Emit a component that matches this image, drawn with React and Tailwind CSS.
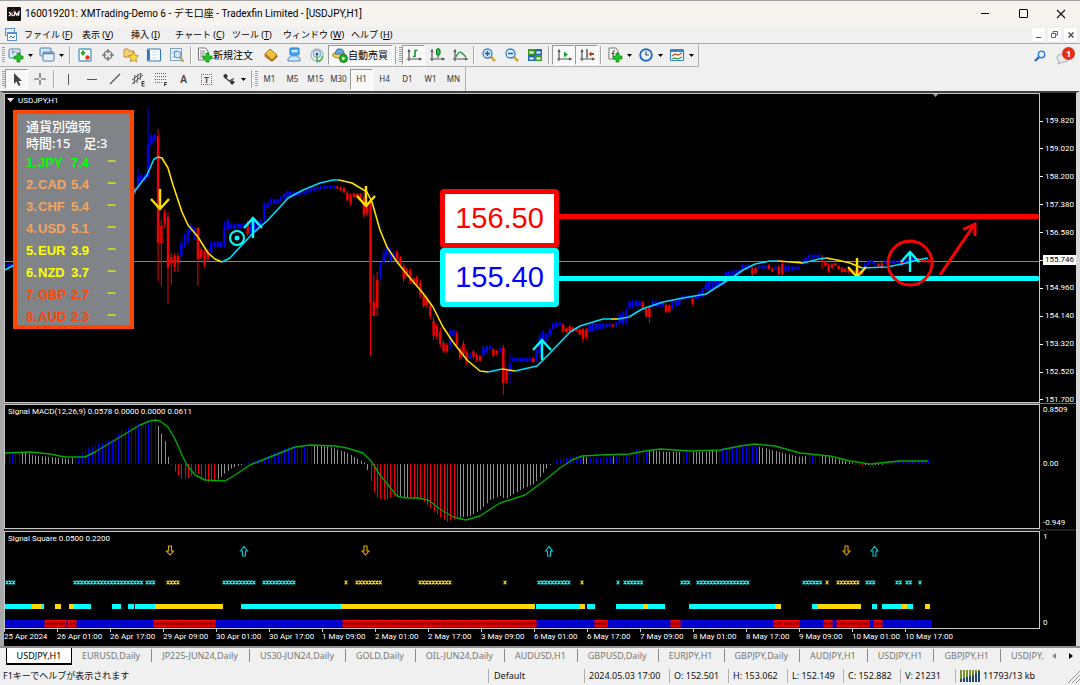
import React from 'react';

const STEP = 3.32;
const FIRST_X = 5.3;
const BAR_COUNT = 279;

// [color, x, high, low, bodyTop?, bodyBottom?]
const CANDLES = [
    ['b', 5, 263, 267], ['b', 12, 263, 267], ['r', 135, 187, 195], ['b', 138, 169, 189, 176, 186], ['b', 141, 173, 183], ['b', 145, 174, 182],
    ['b', 148, 108, 178, 144, 177], ['b', 151, 133, 147], ['b', 155, 133, 141], ['r', 158, 129, 281, 136, 243], ['r', 161, 220, 286, 226, 243],
    ['r', 165, 209, 227], ['r', 168, 212, 304, 217, 268], ['r', 171, 253, 285, 257, 263], ['r', 175, 253, 272, 256, 267], ['r', 178, 253, 272, 256, 263],
    ['b', 181, 239, 260], ['b', 184, 233, 248], ['b', 188, 227, 245], ['b', 191, 223, 233], ['b', 195, 227, 240], ['r', 198, 227, 286, 228, 259],
    ['r', 201, 247, 260], ['r', 205, 250, 268], ['r', 208, 249, 261], ['b', 211, 240, 255], ['b', 214, 241, 247], ['b', 221, 241, 248],
    ['b', 224, 222, 248], ['b', 228, 218, 232], ['b', 231, 223, 229], ['b', 244, 223, 229], ['r', 248, 220, 236], ['b', 251, 222, 236], ['b', 261, 219, 228],
    ['b', 264, 201, 223], ['b', 268, 202, 209], ['b', 271, 198, 205], ['b', 277, 199, 204], ['b', 288, 190, 198], ['b', 293, 191, 197],
    ['b', 303, 191, 195], ['b', 313, 187, 192], ['b', 324, 185, 189], ['b', 334, 185, 189], ['r', 338, 186, 189], ['r', 344, 187, 193],
    ['r', 347, 191, 202], ['r', 351, 193, 205], ['r', 354, 193, 198], ['r', 361, 193, 198], ['r', 364, 192, 218, 197, 215], ['r', 367, 203, 216],
    ['r', 370, 202, 356, 202, 302], ['r', 374, 275, 316, 302, 316], ['r', 377, 272, 316], ['b', 380, 262, 280], ['b', 384, 250, 265],
    ['b', 387, 243, 257], ['b', 390, 248, 262], ['b', 393, 251, 261], ['r', 397, 250, 262], ['r', 400, 256, 267], ['r', 403, 263, 282],
    ['r', 407, 268, 277], ['r', 410, 268, 284], ['r', 413, 277, 285], ['r', 417, 275, 287], ['r', 420, 280, 298], ['r', 423, 293, 308],
    ['r', 427, 295, 308], ['r', 430, 303, 319], ['r', 433, 317, 340], ['r', 437, 323, 340], ['r', 440, 328, 347], ['r', 443, 341, 353],
    ['r', 447, 343, 353], ['b', 450, 327, 350], ['b', 453, 329, 337], ['r', 457, 331, 348], ['r', 460, 347, 360], ['r', 463, 341, 357],
    ['r', 467, 350, 365], ['b', 470, 353, 359], ['r', 473, 350, 358], ['r', 477, 353, 362], ['r', 480, 355, 362], ['b', 483, 345, 357],
    ['b', 490, 345, 350], ['r', 493, 348, 357], ['r', 497, 350, 355], ['b', 500, 347, 353], ['r', 503, 345, 395, 348, 383], ['r', 506, 368, 383],
    ['b', 510, 353, 383, 363, 373], ['b', 513, 357, 362], ['b', 530, 357, 362], ['r', 533, 357, 363], ['b', 536, 350, 362], ['b', 539, 332, 358],
    ['b', 543, 330, 343], ['b', 546, 333, 342], ['b', 549, 328, 337], ['b', 553, 322, 330], ['b', 560, 322, 326], ['r', 563, 323, 333],
    ['r', 566, 327, 333], ['r', 570, 325, 333], ['r', 578, 329, 332], ['r', 583, 328, 342, 329, 339], ['r', 586, 328, 339], ['b', 589, 323, 333],
    ['b', 609, 323, 327], ['r', 613, 324, 327], ['b', 616, 322, 327], ['b', 619, 312, 325], ['b', 623, 311, 326], ['b', 626, 307, 325],
    ['b', 629, 300, 310], ['b', 639, 300, 306], ['r', 642, 301, 309], ['r', 646, 307, 318], ['r', 649, 307, 323, 308, 317], ['b', 652, 300, 308],
    ['b', 662, 301, 307], ['r', 666, 303, 313], ['r', 669, 304, 313], ['b', 672, 301, 309], ['b', 678, 299, 306], ['b', 683, 295, 300],
    ['b', 689, 295, 299], ['r', 692, 297, 305], ['b', 696, 295, 300], ['b', 702, 288, 297], ['b', 706, 281, 292], ['b', 722, 280, 286],
    ['b', 727, 271, 277], ['b', 738, 269, 275], ['b', 742, 264, 271], ['b', 749, 264, 269], ['r', 752, 267, 276], ['r', 756, 267, 274],
    ['b', 759, 265, 269], ['b', 766, 265, 269], ['r', 769, 264, 270], ['r', 772, 268, 272], ['b', 776, 266, 270], ['r', 779, 265, 276],
    ['r', 782, 260, 282, 264, 274], ['b', 785, 265, 272], ['b', 799, 266, 270], ['b', 802, 260, 265], ['b', 806, 257, 262], ['b', 810, 254, 259],
    ['b', 818, 254, 258], ['r', 821, 255, 269, 257, 262], ['r', 825, 260, 267], ['r', 828, 263, 273], ['r', 832, 263, 269], ['r', 835, 263, 266],
    ['r', 838, 265, 270], ['r', 842, 267, 273], ['r', 852, 270, 273], ['r', 862, 270, 275], ['b', 865, 262, 268], ['b', 868, 260, 265],
    ['b', 872, 260, 264], ['b', 875, 262, 265], ['r', 878, 263, 267], ['r', 882, 262, 269], ['b', 886, 260, 264], ['b', 899, 260, 264],
    ['r', 903, 260, 266], ['b', 907, 257, 262], ['b', 916, 257, 262], ['r', 920, 258, 262], ['r', 928, 259, 263],
];

const MA_LINES = [
    ['#00dcff', '5,270 14,265 134,192 147,175 154,159 158,157'],
    ['#ffe100', '158,157 162,158 168,168 173,185 182,212 188,225 198,237 208,253 215,259 222,262'],
    ['#00dcff', '222,262 230,258 240,247 253,233 267,221 280,207 288,198 303,190 320,183 333,180 339,180'],
    ['#ffe100', '339,180 352,183 367,192 372,202 380,230 387,247 397,262 410,278 422,292 433,307 443,327 453,342 467,360 480,371 488,372'],
    ['#00dcff', '488,372 502,369'],
    ['#ffe100', '502,369 515,371'],
    ['#00dcff', '515,371 537,366 550,353 570,332 580,326 603,319 611,319'],
    ['#ffe100', '611,319 618,319'],
    ['#00dcff', '618,319 629,317 642,309 663,302 683,298 706,294 720,285 733,277 743,270 755,264 770,261 778,261'],
    ['#ffe100', '778,261 803,263'],
    ['#00dcff', '803,263 819,259 826,258'],
    ['#ffe100', '826,258 837,260 850,263 862,268'],
    ['#00dcff', '862,268 887,267 907,263 917,260 928,258'],
];

const MACD_LEVELS = [
    [5, 452], [24, 452], [30, 455], [50, 457], [70, 459], [82, 453], [90, 447], [115, 438], [120, 431], [140, 423], [148, 422], [155, 414], [158, 426],
    [165, 442], [168, 457], [171, 463], [174, 471], [181, 479], [188, 478], [196, 472], [206, 483], [216, 481], [230, 469], [240, 465], [245, 463],
    [260, 459], [275, 452], [290, 446], [315, 445], [330, 447], [345, 452], [365, 463], [370, 479], [375, 497], [385, 500], [395, 496], [410, 498],
    [420, 499], [430, 508], [446, 522], [457, 518], [470, 516], [480, 510], [490, 500], [500, 496], [505, 499], [520, 490], [535, 483], [550, 464],
    [555, 461], [565, 457], [580, 456], [590, 458], [620, 456], [636, 449], [650, 450], [665, 452], [690, 452], [705, 452], [720, 449], [740, 445],
    [760, 447], [775, 451], [800, 457], [815, 454], [830, 457], [845, 461], [860, 465], [880, 464], [900, 461], [928, 460],
];

// [lastX, color]
const MACD_COLORS = [
    [20, 'b'], [72, 'g'], [156, 'b'], [170, 'g'], [215, 'r'], [243, 'g'], [312, 'b'], [369, 'g'], [398, 'r'], [408, 'g'], [457, 'r'], [550, 'g'],
    [580, 'b'], [587, 'g'], [610, 'b'], [616, 'g'], [647, 'b'], [680, 'g'], [692, 'b'], [718, 'g'], [757, 'b'], [806, 'g'], [822, 'b'], [854, 'g'],
    [862, 'r'], [884, 'g'], [940, 'b'],
];

const MACD_SIGNAL = '5,453 30,452 50,454 65,457 85,457 95,452 110,443 125,434 140,425 150,421 155,420 160,421 168,427 175,439 182,455 187,465 195,475 205,480 225,481 235,475 250,465 265,459 280,453 295,447 310,445 335,446 347,448 363,453 371,461 380,475 397,496 405,498 418,498 428,500 440,509 453,517 466,520 480,516 500,503 525,495 545,480 560,468 572,460 582,456 600,455 630,454 645,451 660,449 690,451 720,450 740,446 755,444 775,446 800,453 830,456 850,461 870,464 900,461 928,461';

const CROSSES = [
    ['c', 7, 15], ['c', 75, 142], ['c', 147, 155], ['y', 168, 178], ['c', 224, 255], ['c', 264, 294], ['y', 346, 346], ['y', 357, 381], ['y', 420, 450],
    ['y', 505, 505], ['c', 539, 570], ['y', 582, 582], ['c', 618, 618], ['c', 625, 643], ['c', 682, 690], ['c', 698, 749], ['c', 804, 822], ['y', 827, 827],
    ['y', 838, 858], ['c', 867, 875], ['c', 897, 902], ['c', 907, 912], ['c', 920, 920],
];

const SQUARES = [
    ['c', 5, 32], ['y', 32, 41], ['c', 41, 44], ['y', 55, 61], ['y', 69, 74], ['c', 74, 91], ['c', 112, 121], ['c', 128, 134], ['c', 135, 155],
    ['y', 155, 223], ['c', 241, 341], ['y', 341, 535], ['c', 536, 580], ['y', 580, 585], ['c', 587, 595], ['c', 616, 643], ['y', 643, 648],
    ['c', 648, 665], ['c', 689, 775], ['y', 775, 781], ['c', 812, 818], ['y', 818, 861], ['c', 872, 877], ['c', 882, 902], ['y', 902, 907],
    ['c', 907, 913], ['y', 925, 930],
];

const RED_TREND = [[45, 66], [68, 76], [154, 215], [343, 536], [595, 607], [671, 680], [774, 783], [784, 799], [824, 832], [837, 869], [874, 882]];

const PRICES = ['159.820', '159.020', '158.200', '157.380', '156.580', '155.746', '154.960', '154.140', '153.320', '152.520', '151.700'];

const TIMES = [
    '25 Apr 2024', '26 Apr 01:00', '26 Apr 17:00', '29 Apr 09:00', '30 Apr 01:00', '30 Apr 17:00', '1 May 09:00', '2 May 01:00', '2 May 17:00',
    '3 May 09:00', '6 May 01:00', '6 May 17:00', '7 May 09:00', '8 May 01:00', '8 May 17:00', '9 May 09:00', '10 May 01:00', '10 May 17:00',
];

const STRENGTH = [
    ['JPY', '7.4', 'text-[#00ff00]'], ['CAD', '5.4', 'text-[#f4a460]'], ['CHF', '5.4', 'text-[#f4a460]'], ['USD', '5.1', 'text-[#f4a460]'],
    ['EUR', '3.9', 'text-[#ffff00]'], ['NZD', '3.7', 'text-[#ffff00]'], ['GBP', '2.7', 'text-[#ff4500]'], ['AUD', '2.3', 'text-[#ff4500]'],
];

const TABS = [
    'EURUSD,Daily', 'JP225-JUN24,Daily', 'US30-JUN24,Daily', 'GOLD,Daily', 'OIL-JUN24,Daily', 'AUDUSD,H1', 'GBPUSD,Daily', 'EURJPY,H1',
    'GBPJPY,Daily', 'AUDJPY,H1', 'USDJPY,H1', 'GBPJPY,H1',
];

const MENUS = [
    ['ファイル', 'F', 'w-[58px]'], ['表示', 'V', 'w-[49px]'], ['挿入', 'I', 'w-[44px]'], ['チャート', 'C', 'w-[57px]'],
    ['ツール', 'T', 'w-[51px]'], ['ウィンドウ', 'W', 'w-[68px]'], ['ヘルプ', 'H', 'w-[48px]'],
];

const FILL = { b: '#0000f0', r: '#f00000', g: '#909090', c: '#00ffff', y: '#ffd700' };

const barX = (i) => FIRST_X + i * STEP;

const lerp = (points, x) => {
    const next = points.findIndex(p => p[0] >= x);
    if (next <= 0) return points[next === 0 ? 0 : points.length - 1][1];
    const [x0, y0] = points[next - 1];
    const [x1, y1] = points[next];
    return y0 + (y1 - y0) * (x - x0) / (x1 - x0);
};

const getCandle = (x) => {
    const exact = CANDLES.find(c => Math.abs(c[1] - x) <= 1.6);
    if (exact) {
        const [color, , high, low] = exact;
        const pad = (low - high) * 0.18;
        return { color, high, low, top: exact[4] ?? high + pad, bottom: exact[5] ?? low - pad };
    }
    const next = CANDLES.find(c => c[1] > x) || CANDLES[CANDLES.length - 1];
    const high = lerp(CANDLES.map(c => [c[1], c[2]]), x);
    const low = lerp(CANDLES.map(c => [c[1], c[3]]), x);
    return { color: next[0], high, low, top: high + 1, bottom: low - 1 };
};

const bars = Array.from({ length: BAR_COUNT }, (_, i) => barX(i)).filter(x => x < 930);

const DownArrow = ({ x, y, h = 21 }) => (
    <path d={`M${x} ${y}v${h - 1}M${x - 9} ${y + h - 11}l9 10 9-10`} fill="none" stroke="#ffe100" strokeWidth="2.4" />
);

const UpArrow = ({ x, y }) => (
    <path d={`M${x} ${y + 21}v-20M${x - 9} ${y + 11}l9-10 9 10`} fill="none" stroke="#00ffff" strokeWidth="2.4" />
);

const PriceChart = () => (
    <svg className="block w-full h-full" aria-hidden="true">
        <g transform="translate(-5 -94)">
            <path d="M931 92h9l-4.5 5z" fill="#a0a0b0" />
            <path d="M7 98h7l-3.5 4z" fill="#fff" />
            <path d="M5 261.5H3000" stroke="#778899" strokeWidth="1" />
            {bars.map(x => {
                const c = getCandle(x);
                return (
                    <g key={x} fill={FILL[c.color]}>
                        <rect x={x - 0.5} y={c.high} width="1" height={c.low - c.high} />
                        <rect x={x - 1.2} y={c.top} width="2.5" height={Math.max(1, c.bottom - c.top)} />
                    </g>
                );
            })}
            {MA_LINES.map(([color, points]) => (
                <polyline key={points} points={points} fill="none" stroke={color} strokeWidth="1.6" strokeLinejoin="round" />
            ))}
            <path d="M559 216.5H1037" stroke="#ff0000" strokeWidth="5" strokeLinecap="round" />
            <DownArrow x={160} y={189} />
            <UpArrow x={253} y={217} />
            <DownArrow x={366} y={186} />
            <UpArrow x={542} y={339} />
            <DownArrow x={857} y={258} h={20} />
            <UpArrow x={910} y={251} />
            <path d="M559 278.5H1037" stroke="#00ffff" strokeWidth="5" strokeLinecap="round" />
            <circle cx="237" cy="238" r="7" fill="none" stroke="#00ffff" strokeWidth="2" />
            <circle cx="237" cy="238" r="2.5" fill="#00ffff" />
            <circle cx="910" cy="263" r="22" fill="none" stroke="#ff0000" strokeWidth="2.8" />
            <path d="M940 275L974 225M963 229.500L975 224L975 236" fill="none" stroke="#ff0000" strokeWidth="3" />
        </g>
    </svg>
);

const MacdChart = () => (
    <svg className="block w-full h-full" aria-hidden="true">
        <g transform="translate(-5 -405)">
            {bars.map(x => {
                const y = lerp(MACD_LEVELS, x);
                const color = MACD_COLORS.find(c => x <= c[0])[1];
                return <rect key={x} x={Math.round(x)} y={Math.min(y, 464)} width="1" height={Math.max(1, Math.abs(464 - y))} fill={FILL[color]} />;
            })}
            <polyline points={MACD_SIGNAL} fill="none" stroke="#00a800" strokeWidth="1.4" strokeLinejoin="round" />
        </g>
    </svg>
);

const crossPath = (from, to, y) => {
    let d = '';
    for (let x = from; x <= to + 0.5; x += STEP) d += `M${x - 1.4} ${y - 1.8}l2.8 3.6m0-3.6l-2.8 3.6`;
    return d;
};

const SquareChart = () => (
    <svg className="block w-full h-full" aria-hidden="true">
        <g transform="translate(-5 -532)">
            {[170, 365.5, 846.5].map(x => (
                <path key={x} d={`M${x - 1.5} 546h3v5h2l-3.5 4-3.5-4h2z`} fill="none" stroke="#e0a800" strokeWidth="1.1" />
            ))}
            {[244, 549, 874.5].map(x => (
                <path key={x} d={`M${x - 1.5} 556h3v-5h2l-3.5-4.5-3.5 4.5h2z`} fill="none" stroke="#00c8d0" strokeWidth="1.1" />
            ))}
            {CROSSES.map(([color, from, to]) => (
                <path key={from} d={crossPath(from, to, 582.5)} stroke={FILL[color]} strokeWidth="1.1" />
            ))}
            {SQUARES.map(([color, from, to]) => (
                <rect key={from} x={from} y="604" width={to - from} height="5" fill={FILL[color]} />
            ))}
            <rect x="5" y="620" width="926" height="7" fill="#0000d8" />
            {RED_TREND.map(([from, to]) => (
                <rect key={from} x={from} y="620.5" width={to - from} height="6" fill="#c80000" stroke="#ff0000" strokeWidth="1" />
            ))}
            <path d="M7 623.5H929" stroke="#000040" strokeWidth="1.6" strokeDasharray="1.3 2.02" />
        </g>
    </svg>
);

const Svg = ({ children }) => (
    <svg width="16" height="16" viewBox="0 0 16 16" fill="none" className="shrink-0" aria-hidden="true">{children}</svg>
);

const Plus = () => <path d="M9 6h3v3h3v3h-3v3H9v-3H6V9h3z" fill="#22c522" stroke="#108010" strokeWidth="0.7" />;

const Axes = () => <path d="M3 3v11M1 12h14M2 5l1-2 1 2M13 11l2 1-2 1" stroke="#555" strokeWidth="1.2" />;

const Caret = () => <svg width="5" height="3" viewBox="0 0 5 3" className="shrink-0" aria-hidden="true"><path d="M0 0h5L2.5 3z" fill="#000" /></svg>;

const icons = {
    newChart: <Svg><rect x="1" y="2" width="11" height="9" rx="1" fill="#e8f2fc" stroke="#4a80b8" /><path d="M3 5h6M5 3v5" stroke="#6a9ac8" /><Plus /></Svg>,
    profiles: <Svg><rect x="1" y="1" width="11" height="8" rx="1" fill="#d8e8f8" stroke="#4a80b8" /><rect x="4" y="5" width="11" height="9" rx="1" fill="#e8f2fc" stroke="#4a80b8" /><path d="M4 6.5h11" stroke="#4a80b8" strokeWidth="1.5" /></Svg>,
    market: <Svg><rect x="2" y="2" width="12" height="12" rx="1" fill="#fff" stroke="#5a9ac8" strokeWidth="1.4" /><path d="M3.5 6l2.5-3 2.5 3L6 9z" fill="#28a828" /><circle cx="10.500" cy="10.500" r="2.2" fill="#e03818" /></Svg>,
    cross: <Svg><circle cx="8" cy="8" r="4" stroke="#666" strokeWidth="1.2" /><path d="M8 2v4.500M8 9.500V14M2 8h4.500M9.500 8H14" stroke="#666" strokeWidth="1.2" /></Svg>,
    navigator: <Svg><path d="M1 3q0-1 1-1h3l1 2h5v6H1z" fill="#f4cf72" stroke="#c09030" /><path d="M10.500 5l1.600 3.300 3.400.4-2.500 2.500.6 3.600-3.100-1.700-3.100 1.700.6-3.600L5.500 8.700l3.400-.4z" fill="#ffd840" stroke="#b88418" strokeWidth="0.8" /></Svg>,
    terminal: <Svg><rect x="1.500" y="2" width="13" height="12" rx="1" fill="#fff" stroke="#3878b0" strokeWidth="1.2" /><path d="M3 3v10" stroke="#3878b0" strokeWidth="2" /><path d="M6 5h6M6 8h6M6 11h6" stroke="#c8dcf0" /></Svg>,
    tester: <Svg><rect x="1.500" y="1.500" width="11" height="12" fill="#f4f8fc" stroke="#7aa0c8" /><path d="M3 4h6M3 6h6M3 10h3" stroke="#a0b8d0" /><circle cx="8.500" cy="7.500" r="3.500" fill="#cfe6fa" stroke="#4a88c0" /><path d="M11 10.500l3.500 4" stroke="#d0a030" strokeWidth="2" /></Svg>,
    order: <Svg><path d="M1.500 1h7l2.500 3v9H1.500z" fill="#fff" stroke="#777" /><path d="M3 4h5M3 6h5M3 8h4M3 10h3" stroke="#888" /><Plus /></Svg>,
    book: <Svg><path d="M2 7l5-5 7 6-5 5z" fill="#f0c040" stroke="#b07818" /><path d="M2 7v2.500l7 5 5-4.500V8.500l-5 4.500z" fill="#c88820" stroke="#905c10" strokeWidth="0.7" /></Svg>,
    mql: <Svg><rect x="4" y="1" width="9" height="7" rx="1" fill="#50b0f0" stroke="#2070c0" /><path d="M5.500 4h6" stroke="#fff" strokeWidth="1.500" /><path d="M2 14q-1-3 2-4 1-2 4-1 3-1 4 1 3 1 2 4z" fill="#d0e4f8" stroke="#5088c0" /></Svg>,
    signals: <Svg><circle cx="8" cy="8" r="6" stroke="#a4bccc" strokeWidth="1.4" /><circle cx="8" cy="7" r="3.500" stroke="#80a8c4" strokeWidth="1.2" /><circle cx="8" cy="7" r="1.500" fill="#2060c0" /><path d="M8 8v6.500q5 0 5.500-5.500" stroke="#58b458" strokeWidth="1.800" /></Svg>,
    auto: <Svg><ellipse cx="7" cy="8" rx="6.500" ry="3" fill="#f0c850" stroke="#b08828" /><path d="M3 7q1-6 5-5 4 0 4 5z" fill="#60a8e0" stroke="#3878b0" /><circle cx="11.500" cy="11.500" r="4" fill="#22b022" stroke="#108010" /><path d="M10.300 9.500l3 2-3 2z" fill="#fff" /></Svg>,
    bars: <Svg><Axes /><path d="M9 3v7M9 3.500h2.500M7 9.500h2" stroke="#109830" strokeWidth="1.600" /></Svg>,
    candles: <Svg><Axes /><path d="M9 1v10" stroke="#087020" /><rect x="7.500" y="2" width="3.500" height="6" rx="1" fill="#28c848" stroke="#087020" /></Svg>,
    line: <Svg><Axes /><path d="M4 10q3-7 6-4l4 4" stroke="#109830" strokeWidth="1.300" /></Svg>,
    zoomIn: <Svg><path d="M9.500 9.500l4.500 4.500" stroke="#d8a830" strokeWidth="2.600" /><circle cx="6.500" cy="6.500" r="4.500" fill="#d8ecfc" stroke="#3880c8" strokeWidth="1.300" /><path d="M6.500 4v5M4 6.500h5" stroke="#2060b0" strokeWidth="1.500" /></Svg>,
    zoomOut: <Svg><path d="M9.500 9.500l4.500 4.500" stroke="#d8a830" strokeWidth="2.600" /><circle cx="6.500" cy="6.500" r="4.500" fill="#d8ecfc" stroke="#3880c8" strokeWidth="1.300" /><path d="M4 6.500h5" stroke="#2060b0" strokeWidth="1.500" /></Svg>,
    tile: <Svg><path d="M1 2h7v6H1zM8 8h7v6H8z" fill="#38a020" /><path d="M8 2h7v6H8zM1 8h7v6H1z" fill="#2868c0" /><path d="M2.500 4.500h4v2h-4zM9.500 4.500h4v2h-4zM2.500 10.500h4v2h-4zM9.500 10.500h4v2h-4z" fill="#fff" /></Svg>,
    scroll: <Svg><Axes /><path d="M8 4.500l4 3-4 3z" fill="#18a030" /></Svg>,
    shift: <Svg><Axes /><path d="M8 2v9" stroke="#444" strokeWidth="1.300" /><path d="M9.500 7l3-2.500V6H15v2h-2.500v1.500z" fill="#c04010" /></Svg>,
    indicators: <Svg><path d="M2 1h7l2 3v8H2z" fill="#fff" stroke="#777" /><path d="M8 4q-2-1-2 1v5M4.500 6.500h3" stroke="#444" /><Plus /></Svg>,
    clock: <Svg><circle cx="8" cy="8" r="5.800" fill="#e8f4ff" stroke="#2868c0" strokeWidth="1.900" /><path d="M8 4.500V8h3" stroke="#444" strokeWidth="1.200" /></Svg>,
    template: <Svg><rect x="1.500" y="2.500" width="13" height="11" rx="1" fill="#fff" stroke="#3880c8" strokeWidth="1.200" /><path d="M1 4h14" stroke="#3880c8" strokeWidth="2" /><path d="M3 9l3-2 3 1 4-2" stroke="#c04020" strokeWidth="1.200" /><path d="M3 12l3-1 3 1 4-2" stroke="#28a030" strokeWidth="1.200" /></Svg>,
    cursor: <Svg><path d="M5 2v11l2.500-2.500L9.500 15l2-1-2-4H13z" fill="#444" /></Svg>,
    crosshair: <Svg><path d="M8 2v5M8 9v5M2 8h5M9 8h5" stroke="#555" strokeWidth="1.200" /></Svg>,
    vline: <Svg><path d="M7.500 3v11" stroke="#555" /></Svg>,
    hline: <Svg><path d="M3 8.500h10" stroke="#555" /></Svg>,
    trend: <Svg><path d="M3 13L13 3" stroke="#555" strokeWidth="1.200" /></Svg>,
    channel: <Svg><path d="M2 9l9-7M2 13L13 4M5 4l-1 9M8 3L7 12M11 2l-1 7" stroke="#555" /><path d="M14.500 10.500h-2.500v4.500h2.500M12 12.500h2.500" stroke="#333" /></Svg>,
    fibo: <Svg><path d="M2 2.500h12M2 5.500h12M2 8.500h12M2 11.500h7" stroke="#666" strokeDasharray="1 1" /><path d="M14 11.500h-2.500V15M11.500 13.500h2" stroke="#333" /></Svg>,
    arrows: <Svg><path d="M2 5l2.500-2.500L7 5 4.500 8zM8.500 11l2.500 3 3-3-3-2z" fill="#333" /><path d="M5 7l3 3 5-2.500" stroke="#444" strokeWidth="1.300" /></Svg>,
};

const ToolButton = ({ icon, label, caret, pressed, text }) => (
    <button
        aria-label={text ? undefined : label}
        className={`h-[20px] shrink-0 flex items-center ${caret ? 'w-[31px] pl-[3px] gap-[4px]' : text ? 'pl-[3px] w-[65px]' : 'w-[23px] justify-center'} ${pressed ? 'bg-[#f8f8f8] border border-t-[#999] border-l-[#999] border-white' : ''}`}
    >
        {icons[icon]}
        {text && <span className="text-[10px] leading-[14px] text-black whitespace-nowrap">{text}</span>}
        {caret && <Caret />}
    </button>
);

const Sep = () => <div className="w-px h-[18px] mx-[2px] shrink-0 bg-[#a8a8a8] border-r border-white box-content" />;

const Grip = () => <div className="w-[3px] h-[16px] shrink-0 bg-[repeating-linear-gradient(180deg,#a0a0a0_0_1px,#f4f4f4_1px_2px)]" />;

const Pane = ({ title, className, children, axis }) => (
    <div className={`flex ${className}`}>
        <section className="flex-1 min-w-0 relative border border-[#c8c8c8] overflow-hidden">
            {children}
            <h2 className="absolute left-[3px] top-[2px] text-[8px] leading-[9px] text-white whitespace-nowrap">{title}</h2>
        </section>
        <div className="w-[36px] shrink-0 text-[8px] leading-[8px] text-white">{axis}</div>
    </div>
);

const Strength = () => (
    <div className="absolute left-[8px] top-[16px] w-[121px] h-[219px] border-4 border-[#ff4500] bg-[#808488] pl-[9px] pt-[4px] font-['Noto_Sans','Noto_Sans_CJK_JP',sans-serif]">
        <p className="text-[13px] leading-[17px] text-white font-medium">通貨別強弱</p>
        <p className="text-[13px] leading-[17px] text-white font-medium whitespace-pre">時間:15　足:3</p>
        <table className="font-['Liberation_Sans',sans-serif] font-bold text-[13px] leading-[22px] border-collapse">
            <tbody>
                {STRENGTH.map(([name, value, color], i) => (
                    <tr key={name} className={`h-[22px] ${color}`}>
                        <td className="p-0 w-[12px]">{i + 1}.</td>
                        <td className="p-0 w-[33px]">{name}</td>
                        <td className="p-0 w-[36px]">{value}</td>
                        <td className="p-0 text-[16px] leading-[18px] text-[#d0d020] align-top">–</td>
                    </tr>
                ))}
            </tbody>
        </table>
    </div>
);

const App = () => {
    return (
        <div className="min-h-screen flex flex-col bg-[#f0f0f0] text-black border-t border-[#a0a0a0] font-['Noto_Sans','Noto_Sans_CJK_JP',sans-serif]">

            {/* Title bar */}
            <header className="h-[25px] flex items-center bg-[#f7f3ef] pl-[7px]">
                <svg width="14" height="14" viewBox="0 0 14 14" aria-hidden="true">
                    <rect width="14" height="14" rx="1" fill="#111" />
                    <path d="M2 5l4 4M6 5L2 9M7 9l1-4 1.500 3L12 5l-.5 4" stroke="#fff" strokeWidth="1.300" fill="none" />
                    <path d="M4 7l3-3" stroke="#e02020" />
                </svg>
                <h1 className="ml-[4px] text-[10px] leading-[16px] whitespace-nowrap font-['Roboto','Noto_Sans_CJK_JP',sans-serif]">160019201: XMTrading-Demo 6 - デモ口座 - Tradexfin Limited - [USDJPY,H1]</h1>
                <div className="ml-auto flex">
                    <button aria-label="Minimize" className="w-[38px] h-[24px] flex items-center justify-center"><span className="w-[8px] h-px bg-black" /></button>
                    <button aria-label="Maximize" className="w-[38px] h-[24px] flex items-center justify-center"><span className="w-[9px] h-[9px] border border-black rounded-[1px]" /></button>
                    <button aria-label="Close" className="w-[38px] h-[24px] flex items-center justify-center">
                        <svg width="10" height="10" viewBox="0 0 10 10" aria-hidden="true"><path d="M1 1l8 8M9 1L1 9" stroke="#111" strokeWidth="1.100" /></svg>
                    </button>
                </div>
            </header>

            {/* Menu */}
            <nav className="h-[18px] flex items-center pl-[5px] pr-[3px] border-b border-[#a8a8a8]">
                <svg width="12" height="13" viewBox="0 0 12 13" className="mr-[7px]" aria-hidden="true">
                    <rect x=".5" y=".5" width="9" height="7" fill="#e4f0fc" stroke="#5a90c8" />
                    <rect x="2.500" y="4.500" width="9" height="8" fill="#fff" stroke="#5a90c8" />
                    <path d="M3 5.500h8" stroke="#5a90c8" /><path d="M4 10l2-2 2 2 2-2" stroke="#3878b8" fill="none" />
                </svg>
                {MENUS.map(([name, key, width]) => (
                    <button key={name} className={`${width} shrink-0 text-left text-[9px] leading-[14px] whitespace-nowrap`}>{name} (<u>{key}</u>)</button>
                ))}
                <div className="ml-auto flex gap-[3px]">
                    <button aria-label="Minimize chart" className="w-[13px] h-[13px] bg-white flex items-end justify-center pb-[3px]"><span className="w-[5px] h-px bg-[#456]" /></button>
                    <button aria-label="Restore chart" className="w-[13px] h-[13px] bg-white flex items-center justify-center">
                        <svg width="7" height="7" viewBox="0 0 7 7" aria-hidden="true"><path d="M2 2V.5h4.500V4H5M.5 2.500h4v4h-4z" stroke="#567" fill="none" /></svg>
                    </button>
                    <button aria-label="Close chart" className="w-[13px] h-[13px] bg-white flex items-center justify-center">
                        <svg width="6" height="6" viewBox="0 0 6 6" aria-hidden="true"><path d="M.5.5l5 5M5.500.5l-5 5" stroke="#456" strokeWidth="1.500" /></svg>
                    </button>
                </div>
            </nav>

            {/* Toolbars */}
            <div className="flex">
                <div>
                    <div className="h-[23px] flex items-center pl-[2px] pr-px border-b border-r border-[#b0b0b0]">
                        <Grip />
                        <ToolButton icon="newChart" label="New chart" caret />
                        <ToolButton icon="profiles" label="Profiles" caret />
                        <Sep />
                        <ToolButton icon="market" label="Market watch" />
                        <ToolButton icon="cross" label="Data window" />
                        <ToolButton icon="navigator" label="Navigator" />
                        <ToolButton icon="terminal" label="Terminal" />
                        <ToolButton icon="tester" label="Strategy tester" />
                        <Sep />
                        <ToolButton icon="order" text="新規注文" />
                        <ToolButton icon="book" label="MetaEditor" />
                        <ToolButton icon="mql" label="Market" />
                        <ToolButton icon="signals" label="Signals" />
                        <ToolButton icon="auto" text="自動売買" pressed />
                        <Sep />
                        <Grip />
                        <ToolButton icon="bars" label="Bar chart" pressed />
                        <ToolButton icon="candles" label="Candlesticks" />
                        <ToolButton icon="line" label="Line chart" />
                        <Sep />
                        <ToolButton icon="zoomIn" label="Zoom in" />
                        <ToolButton icon="zoomOut" label="Zoom out" />
                        <ToolButton icon="tile" label="Tile windows" />
                        <Sep />
                        <ToolButton icon="scroll" label="Auto scroll" pressed />
                        <ToolButton icon="shift" label="Chart shift" pressed />
                        <Sep />
                        <ToolButton icon="indicators" label="Indicators" caret />
                        <ToolButton icon="clock" label="Periods" caret />
                        <ToolButton icon="template" label="Templates" caret />
                    </div>
                    <div className="h-[24px] w-fit flex items-center pl-[2px] border-r border-[#b0b0b0]">
                        <Grip />
                        <ToolButton icon="cursor" label="Cursor" pressed />
                        <ToolButton icon="crosshair" label="Crosshair" />
                        <Sep />
                        <ToolButton icon="vline" label="Vertical line" />
                        <ToolButton icon="hline" label="Horizontal line" />
                        <ToolButton icon="trend" label="Trendline" />
                        <ToolButton icon="channel" label="Equidistant channel" />
                        <ToolButton icon="fibo" label="Fibonacci" />
                        <button className="w-[23px] h-[20px] text-[10px] font-semibold text-[#444]">A</button>
                        <button className="w-[23px] h-[20px] flex items-center justify-center">
                            <span className="w-[11px] h-[11px] border border-dotted border-[#666] text-[9px] leading-[9px] font-semibold text-[#444]">T</span>
                        </button>
                        <ToolButton icon="arrows" label="Arrows" caret />
                        <Sep />
                        <Grip />
                        {['M1', 'M5', 'M15', 'M30', 'H1', 'H4', 'D1', 'W1', 'MN'].map(period => (
                            <button
                                key={period}
                                className={`w-[23px] h-[21px] text-[8px] text-[#333] ${period === 'H1' ? 'bg-[#f8f8f8] border border-t-[#999] border-l-[#999] border-white' : ''}`}
                            >
                                {period}
                            </button>
                        ))}
                    </div>
                </div>
                <div className="ml-auto mr-[5px] h-[23px] flex items-center gap-[10px]">
                    <button aria-label="Search">
                        <svg width="12" height="12" viewBox="0 0 12 12" aria-hidden="true"><path d="M1 11l4-4" stroke="#2868c0" strokeWidth="2.400" /><circle cx="7.500" cy="4.500" r="3.200" fill="#fff" stroke="#3880e0" strokeWidth="1.500" /></svg>
                    </button>
                    <button aria-label="Messages" className="relative w-[19px] h-[18px]">
                        <svg width="19" height="18" viewBox="0 0 19 18" aria-hidden="true"><path d="M3 14l-1 3 5-2q6 0 6-4T7 7 1 11q0 2 2 3z" fill="#e8e8e8" stroke="#aaa" /></svg>
                        <span className="absolute right-0 top-0 w-[13px] h-[13px] rounded-full bg-[#e03010] text-white text-[9px] leading-[13px] font-bold text-center">1</span>
                    </button>
                </div>
            </div>

            {/* Chart window */}
            <main className="flex-1 bg-black border-t-2 border-t-[#404040] border-x-4 border-l-[#a8a8a8] border-r-[#d8d8d8] font-['Roboto',sans-serif]">
                <Pane
                    className="h-[310px]"
                    title={<span className="pl-[10px]">USDJPY,H1</span>}
                    axis={
                        <ul className="h-[311px] pt-[24px] flex flex-col justify-between">
                            {PRICES.map(price => (
                                <li key={price} className="flex items-center">
                                    <span className="w-[3px] h-px bg-white" />
                                    <span className={price === '155.746' ? 'bg-white text-black py-px pl-[2px] -my-px w-[33px]' : 'pl-[2px]'}>{price}</span>
                                </li>
                            ))}
                        </ul>
                    }
                >
                    <PriceChart />
                    <Strength />
                    <div className="absolute left-[435px] top-[95px] flex flex-col font-['Liberation_Sans',sans-serif] text-[29px] leading-[49px] text-center">
                        <div className="w-[119px] h-[59px] border-[5px] border-[#ff0000] rounded-[4px] bg-white text-[#ff0000]">156.50</div>
                        <div className="w-[119px] h-[59px] border-[5px] border-[#00ffff] rounded-[4px] bg-white text-[#0000ff]">155.40</div>
                    </div>
                </Pane>
                <div className="h-px bg-[#707070]" />
                <Pane
                    className="h-[125px]"
                    title="Signal MACD(12,26,9) 0.0578 0.0000 0.0000 0.0611"
                    axis={
                        <div className="h-full pl-[3px] py-[2px] flex flex-col justify-between">
                            <span>0.8509</span><span className="pb-[5px]">0.00</span><span>-0.949</span>
                        </div>
                    }
                >
                    <MacdChart />
                </Pane>
                <div className="h-[2px] bg-[#202020]" />
                <Pane
                    className="h-[98px]"
                    title="Signal Square 0.0500 0.2200"
                    axis={
                        <div className="h-full pl-[3px] py-[2px] flex flex-col justify-between">
                            <span>1</span><span>0</span>
                        </div>
                    }
                >
                    <SquareChart />
                </Pane>
                <ol className="flex text-[8px] leading-[10px] text-white overflow-hidden pb-[4px]">
                    {TIMES.map(time => (
                        <li key={time} className="w-[53px] shrink-0 whitespace-nowrap">
                            <span className="block w-px h-[3px] bg-[#c8c8c8]" />
                            {time}
                        </li>
                    ))}
                </ol>
            </main>

            {/* Chart tabs */}
            <div className="h-[20px] flex items-start pl-[6px] border-t-2 border-[#909090] text-[9px] leading-[15px] text-[#777]">
                <button className="h-[17px] w-[66px] shrink-0 bg-white border border-t-0 border-b-2 border-black text-black">USDJPY,H1</button>
                <div className="flex-1 min-w-0 flex overflow-hidden divide-x divide-[#888] pt-px leading-[13px]">
                    {TABS.map(tab => (
                        <button key={tab} className="h-[13px] pl-[10px] pr-[11px] shrink-0 whitespace-nowrap">{tab}</button>
                    ))}
                    <button className="h-[13px] pl-[10px] shrink-0">USDJPY,</button>
                </div>
                <div className="w-[32px] h-[16px] shrink-0 flex items-center gap-[13px] pl-[4px]">
                    <button aria-label="Scroll left"><svg width="4" height="6" viewBox="0 0 4 6" aria-hidden="true"><path d="M4 0v6L0 3z" fill="#888" /></svg></button>
                    <button aria-label="Scroll right"><svg width="4" height="6" viewBox="0 0 4 6" aria-hidden="true"><path d="M0 0v6l4-3z" fill="#000" /></svg></button>
                </div>
            </div>

            {/* Status bar */}
            <footer className="h-[19px] flex items-center text-[9px] leading-[14px] text-[#111] whitespace-nowrap divide-x divide-[#b0b0b0]">
                <span className="flex-1 pl-[3px]">F1キーでヘルプが表示されます</span>
                <span className="w-[96px] pl-[5px]">Default</span>
                <span className="w-[85px] pl-[4px]">2024.05.03 17:00</span>
                <span className="w-[59px] pl-[4px]">O: 152.501</span>
                <span className="w-[59px] pl-[4px]">H: 153.062</span>
                <span className="w-[56px] pl-[4px]">L: 152.149</span>
                <span className="w-[57px] pl-[4px]">C: 152.882</span>
                <span className="w-[55px] pl-[4px]">V: 21231</span>
                <span className="w-[124px] pl-[4px] flex items-center gap-[3px]">
                    <svg width="20" height="12" viewBox="0 0 20 12" aria-hidden="true">
                        <path d="M1 0v12M4 0v12M7 0v12M10 0v12M13 0v12M16 0v12M19 0v12" stroke="#7a9030" strokeWidth="2" />
                        <path d="M1 9v3M4 8v4M7 7v5M10 6v6M13 5v7M16 3v9M19 1v11" stroke="#204870" strokeWidth="2" />
                    </svg>
                    11793/13 kb
                    <svg width="12" height="12" viewBox="0 0 12 12" className="ml-auto self-end" aria-hidden="true"><path d="M0 12L12 0M4 12l8-8M8 12l4-4" stroke="#999" /></svg>
                </span>
            </footer>
        </div>
    );
};

export default App;
